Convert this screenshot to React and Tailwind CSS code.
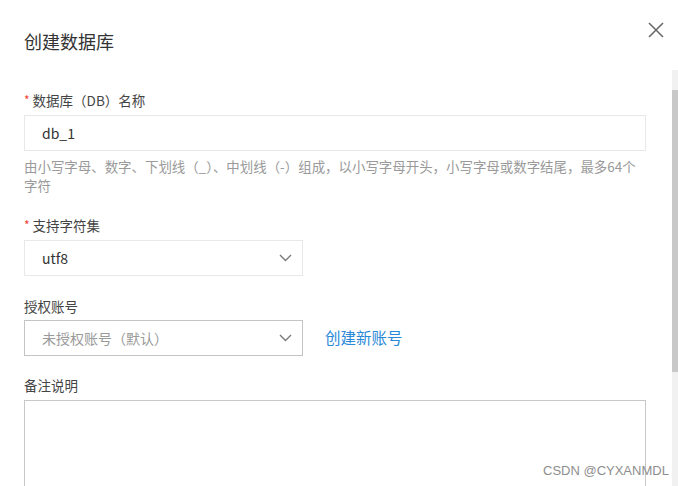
import React from "react";

const cjk = { fontFamily: '"Noto Sans CJK SC", "Noto Sans", sans-serif' };

function Label({ required, children }) {
  return (
    <div className="flex h-5 items-center text-[13.5px] leading-5 text-[#444]">
      {required && <span className="mr-[3px] text-[12px] text-[#f04134]">*</span>}
      <span>{children}</span>
    </div>
  );
}

function Chevron() {
  return (
    <svg width="13" height="8" viewBox="0 0 13 8" fill="none" aria-hidden>
      <path d="M1 1l5.5 5.5L12 1" stroke="#7a7a7a" strokeWidth="1.4" />
    </svg>
  );
}

function Select({ value, placeholder, dark }) {
  return (
    <div
      className={`flex h-9 w-[279px] items-center justify-between border bg-white pl-[17px] pr-[10px] text-[14px] ${
        dark ? "border-[#c4c4c4]" : "border-[#e8e8e8]"
      }`}
    >
      <span className={placeholder ? "text-[#9a9a9a]" : "text-[#333]"}>{value}</span>
      <Chevron />
    </div>
  );
}

export default function App() {
  return (
    <div className="relative flex h-[486px] w-[678px] overflow-hidden bg-white" style={cjk}>
      <main className="flex-1 pl-6 pr-[26px]">
        {/* header */}
        <div className="flex items-start justify-between pt-[22px]">
          <h1 className="mt-[6px] text-[18px] font-normal leading-[26px] text-[#333]">创建数据库</h1>
          <button type="button" className="-mr-[18px] h-4 w-4" aria-label="关闭">
            <svg width="16" height="16" viewBox="0 0 16 16" fill="none">
              <path d="M1 1l14 14M15 1L1 15" stroke="#6b6b6b" strokeWidth="1.6" />
            </svg>
          </button>
        </div>

        {/* db name */}
        <div className="mt-9">
          <Label required>数据库（DB）名称</Label>
          <div className="mt-[5px] flex h-9 items-center border border-[#e8e8e8] px-[17px] text-[14px] text-[#333]">
            db_1
          </div>
          <p className="mt-[6px] text-[13.45px] leading-[19px] text-[#9a9a9a]">
            由小写字母、数字、下划线（_）、中划线（-）组成，以小写字母开头，小写字母或数字结尾，最多64个
            <br />
            字符
          </p>
        </div>

        {/* charset */}
        <div className="mt-5">
          <Label required>支持字符集</Label>
          <div className="mt-[5px]">
            <Select value="utf8" />
          </div>
        </div>

        {/* account */}
        <div className="mt-5">
          <Label>授权账号</Label>
          <div className="mt-[4px] flex items-center gap-[22px]">
            <Select value="未授权账号（默认）" placeholder dark />
            <a href="#" className="text-[15.5px] text-[#2b8ad8]">
              创建新账号
            </a>
          </div>
        </div>

        {/* remark */}
        <div className="mt-[19px]">
          <Label>备注说明</Label>
          <div className="mt-[5px] h-[110px] border border-[#c8c8c8]" />
        </div>
      </main>

      {/* scrollbar */}
      <div className="flex w-[6px] flex-col pt-[70px]">
        <div className="h-5 bg-[#f1f1f1]" />
        <div className="h-[282px] bg-[#c8c8c8]" />
        <div className="flex-1 bg-[#f1f1f1]" />
      </div>

      <span
        className="absolute left-[543px] top-[463px] text-[13px] leading-4 text-[#8e8e8e]"
        style={{ fontFamily: '"Liberation Sans", Arial, sans-serif' }}
      >
        CSDN @CYXANMDL
      </span>
    </div>
  );
}
